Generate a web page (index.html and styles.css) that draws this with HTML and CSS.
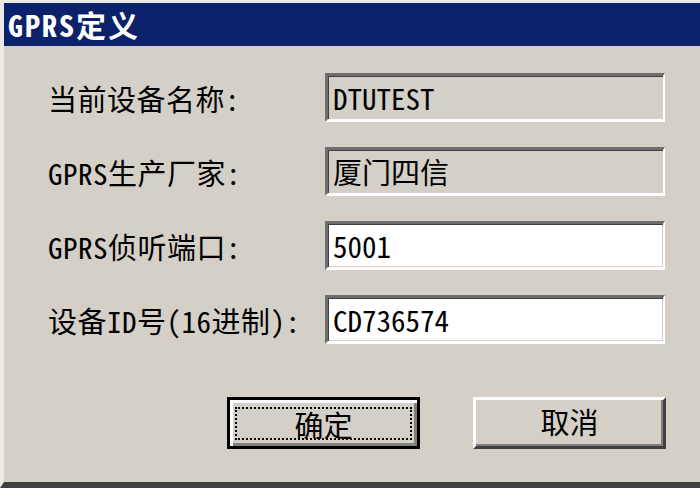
FILE: index.html
```html
<!DOCTYPE html>
<html lang="zh-CN">
<head>
    <meta charset="UTF-8">
    <title>GPRS定义</title>
    <link rel="stylesheet" href="styles.css">
</head>
<body>

    <!-- GPRS dialog -->
    <div class="dialog">
        <div class="titlebar">GPRS定义</div>

        <div class="content">
            <div class="form">
                <label class="label">当前设备名称:</label>
                <div class="field readonly">DTUTEST</div>

                <label class="label">GPRS生产厂家:</label>
                <div class="field readonly">厦门四信</div>

                <label class="label">GPRS侦听端口:</label>
                <div class="field">5001</div>

                <label class="label">设备ID号(16进制):</label>
                <div class="field">CD736574</div>
            </div>

            <div class="buttons">
                <button class="btn default"><span class="focus">确定</span></button>
                <button class="btn"><span class="plain">取消</span></button>
            </div>
        </div>
    </div>

</body>
</html>
```

FILE: styles.css
```css
body {
    margin: 0;
    font-family: "Noto Sans Mono CJK SC", "Noto Sans CJK SC", monospace;
    font-size: 29px;
    color: #000;
    background-color: #d4d0c8;
}
.dialog {
    width: 700px;
    height: 488px;
    box-sizing: border-box;
    border-top: 3px solid #ebe9e5;
    border-left: 4px solid #ebe9e5;
    border-bottom: 6px solid #404040;
    background-color: #d4d0c8;
    overflow: hidden;
}
.titlebar {
    height: 43px;
    line-height: 43px;
    background-color: #0b216a;
    color: #fff;
    font-weight: bold;
    font-size: 30px;
    padding-left: 4px;
    letter-spacing: 2px;
}
.content {
    padding-left: 44px;
}
.form {
    display: grid;
    grid-template-columns: 277px 340px;
    grid-auto-rows: 49px;
    row-gap: 25px;
    margin-top: 27px;
}
.label {
    display: flex;
    align-items: center;
    letter-spacing: 0.5px;
}
.field {
    box-sizing: border-box;
    display: flex;
    align-items: center;
    padding-left: 5px;
    padding-bottom: 2px;
    background-color: #fff;
    border-top: 3px solid #6e6e6e;
    border-left: 3px solid #6e6e6e;
    border-right: 2px solid #fff;
    border-bottom: 3px solid #fff;
    box-shadow: inset 1px 1px #404040, inset -1px -1px #d4d0c8;
}
.field.readonly {
    background-color: #d4d0c8;
}
.buttons {
    display: flex;
    gap: 53px;
    padding-left: 179px;
    margin-top: 53px;
}
.btn {
    box-sizing: border-box;
    width: 193px;
    height: 52px;
    padding: 0;
    display: flex;
    font-family: inherit;
    font-size: 29px;
    color: #000;
    background-color: #d4d0c8;
    border-top: 3px solid #fff;
    border-left: 3px solid #fff;
    border-right: 3px solid #404040;
    border-bottom: 3px solid #404040;
    box-shadow: inset -2px -2px #808080;
}
.btn.default {
    border: 3px solid #000;
    box-shadow: inset 3px 3px #fff, inset -3px -3px #808080;
}
.focus, .plain {
    flex: 1;
    display: flex;
    align-items: center;
    justify-content: center;
}
.focus {
    margin: 7px 5px 6px 5px;
    border: 2px dotted #000;
}
.plain {
    padding-bottom: 4px;
}
```
